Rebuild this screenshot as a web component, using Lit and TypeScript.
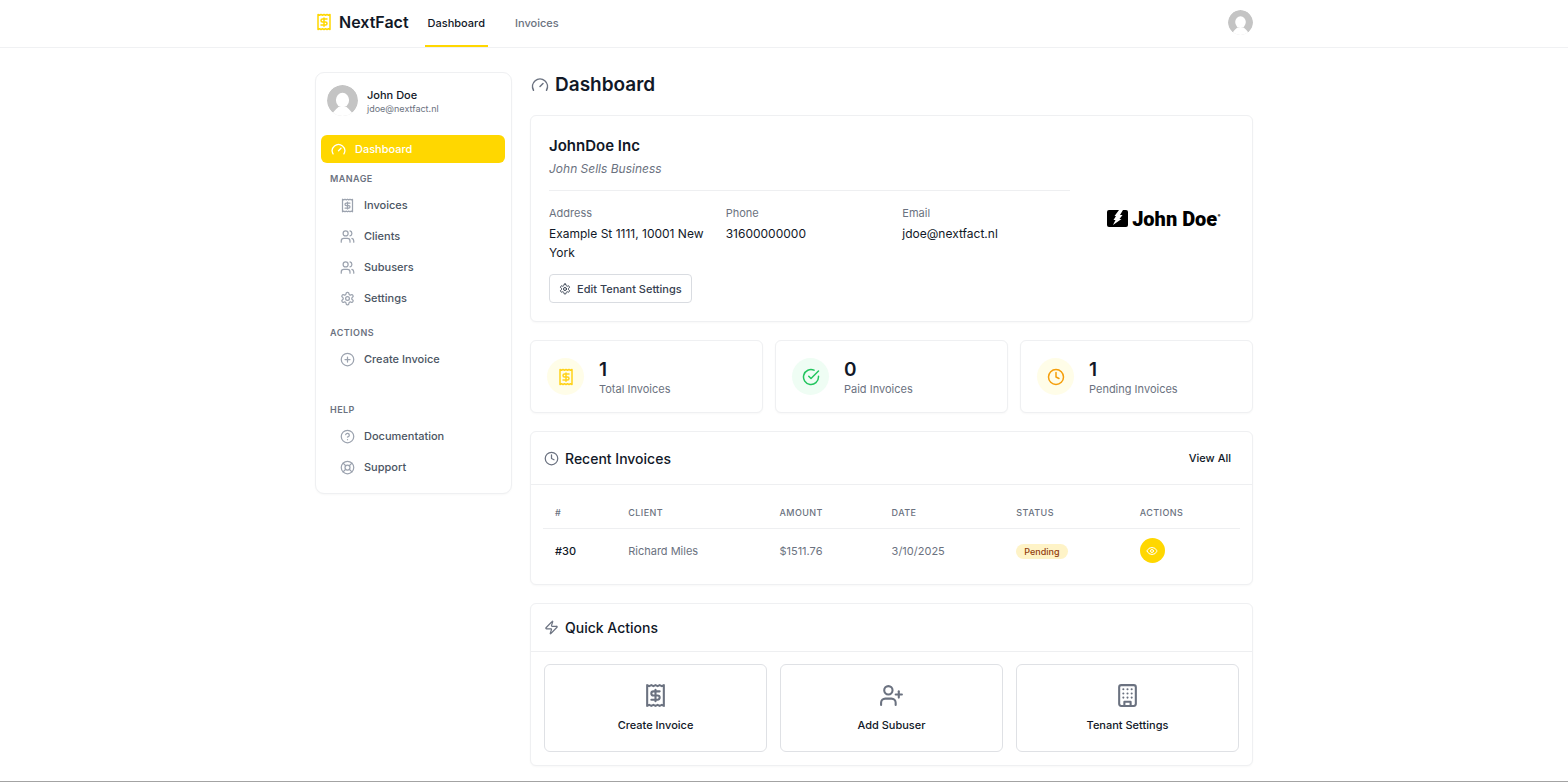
import { LitElement, html, css, svg } from "lit";
import { customElement, property } from "lit/decorators.js";

const icons: Record<string, unknown> = {
  receipt: svg`<path d="M4 2v20l2-1 2 1 2-1 2 1 2-1 2 1 2-1 2 1V2l-2 1-2-1-2 1-2-1-2 1-2-1-2 1Z"/><path d="M16 8h-6a2 2 0 1 0 0 4h4a2 2 0 1 1 0 4H8"/><path d="M12 17.5v-11"/>`,
  gauge: svg`<path d="m12 14 4-4"/><path d="M3.34 19a10 10 0 1 1 17.32 0"/>`,
  users: svg`<path d="M16 21v-2a4 4 0 0 0-4-4H6a4 4 0 0 0-4 4v2"/><circle cx="9" cy="7" r="4"/><path d="M22 21v-2a4 4 0 0 0-3-3.87"/><path d="M16 3.13a4 4 0 0 1 0 7.75"/>`,
  userPlus: svg`<path d="M16 21v-2a4 4 0 0 0-4-4H6a4 4 0 0 0-4 4v2"/><circle cx="9" cy="7" r="4"/><path d="M19 8v6"/><path d="M22 11h-6"/>`,
  settings: svg`<path d="M12.22 2h-.44a2 2 0 0 0-2 2v.18a2 2 0 0 1-1 1.73l-.43.25a2 2 0 0 1-2 0l-.15-.08a2 2 0 0 0-2.73.73l-.22.38a2 2 0 0 0 .73 2.73l.15.1a2 2 0 0 1 1 1.72v.51a2 2 0 0 1-1 1.74l-.15.09a2 2 0 0 0-.73 2.73l.22.38a2 2 0 0 0 2.73.73l.15-.08a2 2 0 0 1 2 0l.43.25a2 2 0 0 1 1 1.73V20a2 2 0 0 0 2 2h.44a2 2 0 0 0 2-2v-.18a2 2 0 0 1 1-1.73l.43-.25a2 2 0 0 1 2 0l.15.08a2 2 0 0 0 2.73-.73l.22-.39a2 2 0 0 0-.73-2.73l-.15-.08a2 2 0 0 1-1-1.74v-.5a2 2 0 0 1 1-1.74l.15-.09a2 2 0 0 0 .73-2.73l-.22-.38a2 2 0 0 0-2.73-.73l-.15.08a2 2 0 0 1-2 0l-.43-.25a2 2 0 0 1-1-1.73V4a2 2 0 0 0-2-2z"/><circle cx="12" cy="12" r="3"/>`,
  plusCircle: svg`<circle cx="12" cy="12" r="10"/><path d="M8 12h8"/><path d="M12 8v8"/>`,
  help: svg`<circle cx="12" cy="12" r="10"/><path d="M9.09 9a3 3 0 0 1 5.83 1c0 2-3 3-3 3"/><path d="M12 17h.01"/>`,
  lifebuoy: svg`<circle cx="12" cy="12" r="10"/><path d="m4.93 4.93 4.24 4.24"/><path d="m14.83 9.17 4.24-4.24"/><path d="m14.83 14.83 4.24 4.24"/><path d="m9.17 14.83-4.24 4.24"/><circle cx="12" cy="12" r="4"/>`,
  check: svg`<path d="M22 11.08V12a10 10 0 1 1-5.93-9.14"/><path d="m9 11 3 3L22 4"/>`,
  clock: svg`<circle cx="12" cy="12" r="10"/><path d="M12 6v6l4 2"/>`,
  zap: svg`<path d="M4 14a1 1 0 0 1-.78-1.63l9.9-10.2a.5.5 0 0 1 .86.46l-1.92 6.02A1 1 0 0 0 13 10h7a1 1 0 0 1 .78 1.63l-9.9 10.2a.5.5 0 0 1-.86-.46l1.92-6.02A1 1 0 0 0 11 14z"/>`,
  eye: svg`<path d="M2.06 12.35a1 1 0 0 1 0-.7 10.75 10.75 0 0 1 19.88 0 1 1 0 0 1 0 .7 10.75 10.75 0 0 1-19.88 0"/><circle cx="12" cy="12" r="3"/>`,
  building: svg`<rect x="4" y="2" width="16" height="20" rx="2"/><path d="M9 22v-4h6v4"/><path d="M8 6h.01M16 6h.01M12 6h.01M12 10h.01M12 14h.01M16 10h.01M16 14h.01M8 10h.01M8 14h.01"/>`,
};

@customElement("nf-icon")
class NfIcon extends LitElement {
  @property() name = "receipt";
  static styles = css`
    :host { display: block; flex: none; width: 15px; height: 15px; }
    svg { display: block; width: 100%; height: 100%; fill: none; stroke: currentColor; stroke-width: 2; stroke-linecap: round; stroke-linejoin: round; }
  `;
  render() {
    return html`<svg viewBox="0 0 24 24" aria-hidden="true">${icons[this.name]}</svg>`;
  }
}

@customElement("nf-avatar")
class NfAvatar extends LitElement {
  static styles = css`
    :host { display: block; flex: none; width: 31px; height: 31px; }
    svg { display: block; width: 100%; height: 100%; border-radius: 50%; }
  `;
  render() {
    return html`<svg viewBox="0 0 32 32" aria-hidden="true">
      <circle cx="16" cy="16" r="16" fill="#c4c4c4" />
      <ellipse cx="16" cy="15.5" rx="6.8" ry="7.5" fill="#fff" />
      <path d="M5 32c.5-4 3.500-6 7-9.500h8c3.500 3.500 6.500 5.500 7 9.500z" fill="#fff" />
    </svg>`;
  }
}

type Item = { icon: string; label: string };

const sections: { title: string; kind: string; items: Item[] }[] = [
  {
    title: "Manage",
    kind: "first",
    items: [
      { icon: "receipt", label: "Invoices" },
      { icon: "users", label: "Clients" },
      { icon: "users", label: "Subusers" },
      { icon: "settings", label: "Settings" },
    ],
  },
  { title: "Actions", kind: "", items: [{ icon: "plusCircle", label: "Create Invoice" }] },
  {
    title: "Help",
    kind: "last",
    items: [
      { icon: "help", label: "Documentation" },
      { icon: "lifebuoy", label: "Support" },
    ],
  },
];

const contact = [
  ["Address", "Example St 1111, 10001 New York"],
  ["Phone", "31600000000"],
  ["Email", "jdoe@nextfact.nl"],
];

const stats = [
  { icon: "receipt", tone: "total", value: 1, label: "Total Invoices" },
  { icon: "check", tone: "good", value: 0, label: "Paid Invoices" },
  { icon: "clock", tone: "warn", value: 1, label: "Pending Invoices" },
];

const invoices = [{ id: "#30", client: "Richard Miles", amount: "$1511.76", date: "3/10/2025", status: "Pending" }];

const quick: Item[] = [
  { icon: "receipt", label: "Create Invoice" },
  { icon: "userPlus", label: "Add Subuser" },
  { icon: "building", label: "Tenant Settings" },
];

@customElement("app-root")
class AppRoot extends LitElement {
  static styles = css`
    :host {
      display: block;
      box-sizing: border-box;
      min-height: 100vh;
      border-bottom: 1px solid #a3a3a3;
      background: #fff;
      color: #111827;
      font: 400 11px/16px Inter, sans-serif;
    }
    * { box-sizing: border-box; }
    h1, h2, h3, p, dl, dd { margin: 0; }
    ul { list-style: none; margin: 0; padding: 0; }
    a { color: inherit; text-decoration: none; }
    button { font: inherit; color: inherit; cursor: pointer; }

    .wrap { max-width: 938px; margin: 0 auto; }
    .topbar { border-bottom: 1px solid #f0f1f3; }
    .topbar .wrap { display: flex; align-items: stretch; height: 47px; }
    .brand { display: flex; align-items: center; gap: 6px; margin-right: 16px; padding-bottom: 3px; font-size: 16px; font-weight: 600; }
    .brand nf-icon { width: 18px; height: 18px; color: #ffd700; }
    .tabs { display: flex; gap: 24px; flex: 1; }
    .tab { display: flex; align-items: center; padding: 1px 3px 0; border-bottom: 2px solid transparent; color: #6b7280; font-weight: 500; }
    .tab.on { border-color: #ffd700; color: #111827; }
    .account { align-self: center; margin-bottom: 3px; padding: 0; border: 0; background: none; border-radius: 50%; }
    .account nf-avatar { width: 25px; height: 25px; }

    .layout { display: grid; grid-template-columns: 197px minmax(0, 1fr); gap: 18px; align-items: start; padding: 24px 0 15px; }
    .card { border: 1px solid #eff0f2; border-radius: 6px; background: #fff; box-shadow: 0 1px 2px rgb(0 0 0 / 3%); }

    .side { padding: 12px 6px 12px 5px; border-radius: 9px; }
    .profile { display: flex; align-items: center; gap: 9px; padding: 0 6px; margin-bottom: 19px; }
    .profile-name { padding-top: 2px; font-weight: 500; line-height: 14px; }
    .profile-mail { color: #6b7280; font-size: 9px; line-height: 13px; }
    .nav-link { display: flex; align-items: center; gap: 9px; height: 28px; padding: 0 19px; border-radius: 6px; color: #4b5563; font-weight: 500; }
    .nav-link nf-icon { color: #9ca3af; }
    .nav-link.on { padding: 0 10px; background: #ffd700; color: #fff; }
    .nav-link.on nf-icon { color: #fff; }
    .nav-list { display: grid; gap: 3px; }
    .nav-title { padding: 14px 9px 6px; color: #6b7280; font-size: 9px; font-weight: 600; line-height: 13px; letter-spacing: 0.05em; text-transform: uppercase; }
    .nav-title.first { padding-top: 9px; }
    .nav-title.last { padding-top: 30px; }

    .main { display: grid; gap: 18px; }
    .page-title { display: flex; align-items: center; gap: 6px; padding: 1px 1px 0; font-size: 19px; font-weight: 600; line-height: 24px; }
    .page-title nf-icon { width: 18px; height: 18px; color: #6b7280; }

    .company { display: flex; align-items: center; gap: 24px; padding: 18px; }
    .company-info { flex: 1; min-width: 0; }
    .company-head { padding-bottom: 12px; border-bottom: 1px solid #eeeff1; }
    .company-name { padding-top: 1px; font-size: 15px; font-weight: 600; line-height: 22px; }
    .company-sub { margin-top: 2px; color: #6b7280; font-size: 12px; font-style: italic; line-height: 19px; }
    .facts { display: grid; grid-template-columns: repeat(3, minmax(0, 1fr)); gap: 9px; margin: 14px 0 12px; }
    .facts dt { margin-bottom: 3px; color: #6b7280; }
    .facts dd { font-size: 12px; line-height: 19px; }
    .btn { display: inline-flex; align-items: center; gap: 6px; height: 29px; padding: 0 9px; border: 1px solid #d9dce1; border-radius: 4px; background: #fff; color: #374151; font-weight: 500; }
    .btn nf-icon { width: 12px; height: 12px; }
    .logo { display: flex; align-items: center; justify-content: center; gap: 4px; width: 140px; color: #000; font: 900 20px/20px Roboto, sans-serif; white-space: nowrap; }
    .logo svg { width: 21px; height: 17px; }
    .logo sup { align-self: flex-start; margin-left: -4px; color: #555; font-size: 6px; line-height: 12px; }

    .stats { display: grid; grid-template-columns: repeat(3, minmax(0, 1fr)); gap: 12px; }
    .stat { display: flex; align-items: center; gap: 15px; height: 73px; padding: 0 16px; }
    .bubble { display: grid; place-items: center; width: 37px; height: 37px; border-radius: 50%; }
    .bubble nf-icon { width: 18px; height: 18px; }
    .bubble.total { background: #fffde8; color: #ffd21a; }
    .bubble.good { background: #effdf4; color: #22c55e; }
    .bubble.warn { background: #fffde8; color: #f59e0b; }
    .stat-value { padding-top: 2px; font-size: 19px; font-weight: 600; line-height: 23px; }
    .stat-label { color: #6b7280; }

    .card-head { display: flex; align-items: center; gap: 6px; padding: 12px 12px 12px 13px; border-bottom: 1px solid #eeeff1; }
    .card-head h2 { flex: 1; font-size: 14px; font-weight: 500; line-height: 23px; }
    .card-head nf-icon { color: #6b7280; }
    .view-all { height: 28px; padding: 0 9px; border: 0; background: none; font-weight: 500; }
    .table-box { padding: 12px; }
    table { width: 100%; border-collapse: collapse; table-layout: fixed; }
    th, td { padding: 0 12px; text-align: left; }
    th { height: 31px; padding-top: 2px; border-bottom: 1px solid #eeeff1; color: #6b7280; font-size: 9px; font-weight: 500; letter-spacing: 0.05em; text-transform: uppercase; }
    td { height: 44px; padding-top: 1px; color: #6b7280; }
    td.id { color: #111827; font-weight: 500; }
    .c-id { width: 10.500%; }
    .c-client { width: 21.700%; }
    .c-amount { width: 16.100%; }
    .c-date { width: 17.900%; }
    .c-status { width: 17.700%; }
    .pill { display: inline-block; padding: 0 8px; border-radius: 9px; background: #fef3c7; color: #92400e; font-size: 9px; font-weight: 500; line-height: 15px; }
    .view { display: grid; place-items: center; width: 25px; height: 25px; padding: 0; border: 0; border-radius: 50%; background: #ffd700; color: #fff; }
    .view nf-icon { width: 12px; height: 12px; }

    .tiles { display: grid; grid-template-columns: repeat(3, minmax(0, 1fr)); gap: 13px; padding: 12px 13px 13px; }
    .tile { display: flex; flex-direction: column; align-items: center; justify-content: center; gap: 9px; height: 88px; padding: 0 0 1px; border: 1px solid #dfe1e5; border-radius: 6px; background: #fff; font-weight: 500; }
    .tile nf-icon { width: 25px; height: 25px; color: #6b7280; }
  `;

  render() {
    return html`
      <header class="topbar">
        <div class="wrap">
          <a class="brand" href="#"><nf-icon name="receipt"></nf-icon>NextFact</a>
          <nav class="tabs" aria-label="Primary">
            <a class="tab on" href="#">Dashboard</a>
            <a class="tab" href="#">Invoices</a>
          </nav>
          <button class="account" aria-label="Account"><nf-avatar></nf-avatar></button>
        </div>
      </header>
      <div class="wrap layout">${this.sidebar()}${this.content()}</div>
    `;
  }

  private sidebar() {
    return html`
      <aside class="card side">
        <div class="profile">
          <nf-avatar></nf-avatar>
          <div>
            <p class="profile-name">John Doe</p>
            <p class="profile-mail">jdoe@nextfact.nl</p>
          </div>
        </div>
        <nav aria-label="Sections">
          <a class="nav-link on" href="#"><nf-icon name="gauge"></nf-icon>Dashboard</a>
          ${sections.map(
            (s) => html`
              <h3 class="nav-title ${s.kind}">${s.title}</h3>
              <ul class="nav-list">
                ${s.items.map((i) => html`<li><a class="nav-link" href="#"><nf-icon name=${i.icon}></nf-icon>${i.label}</a></li>`)}
              </ul>
            `
          )}
        </nav>
      </aside>
    `;
  }

  private content() {
    return html`
      <main class="main">
        <h1 class="page-title"><nf-icon name="gauge"></nf-icon>Dashboard</h1>

        <section class="card company">
          <div class="company-info">
            <div class="company-head">
              <h2 class="company-name">JohnDoe Inc</h2>
              <p class="company-sub">John Sells Business</p>
            </div>
            <dl class="facts">
              ${contact.map(([k, v]) => html`<div><dt>${k}</dt><dd>${v}</dd></div>`)}
            </dl>
            <button class="btn"><nf-icon name="settings"></nf-icon>Edit Tenant Settings</button>
          </div>
          <div class="logo">
            <svg viewBox="0 0 21 17" aria-hidden="true">
              <rect width="21" height="17" rx="2" />
              <path d="M12 0h4l-3 5h2.500l-3 4h2L6 15l2.500-5H6.500l2.500-4H7.500z" fill="#fff" />
            </svg>
            <span>John Doe</span><sup>●</sup>
          </div>
        </section>

        <section class="stats" aria-label="Totals">
          ${stats.map(
            (s) => html`
              <div class="card stat">
                <div class="bubble ${s.tone}"><nf-icon name=${s.icon}></nf-icon></div>
                <div>
                  <p class="stat-value">${s.value}</p>
                  <p class="stat-label">${s.label}</p>
                </div>
              </div>
            `
          )}
        </section>

        <section class="card">
          <div class="card-head">
            <nf-icon name="clock"></nf-icon>
            <h2>Recent Invoices</h2>
            <button class="view-all">View All</button>
          </div>
          <div class="table-box">
            <table>
              <thead>
                <tr>
                  <th class="c-id">#</th>
                  <th class="c-client">Client</th>
                  <th class="c-amount">Amount</th>
                  <th class="c-date">Date</th>
                  <th class="c-status">Status</th>
                  <th>Actions</th>
                </tr>
              </thead>
              <tbody>
                ${invoices.map(
                  (r) => html`
                    <tr>
                      <td class="id">${r.id}</td>
                      <td>${r.client}</td>
                      <td>${r.amount}</td>
                      <td>${r.date}</td>
                      <td><span class="pill">${r.status}</span></td>
                      <td><button class="view" aria-label="View invoice ${r.id}"><nf-icon name="eye"></nf-icon></button></td>
                    </tr>
                  `
                )}
              </tbody>
            </table>
          </div>
        </section>

        <section class="card">
          <div class="card-head">
            <nf-icon name="zap"></nf-icon>
            <h2>Quick Actions</h2>
          </div>
          <div class="tiles">
            ${quick.map((q) => html`<button class="tile"><nf-icon name=${q.icon}></nf-icon>${q.label}</button>`)}
          </div>
        </section>
      </main>
    `;
  }
}
